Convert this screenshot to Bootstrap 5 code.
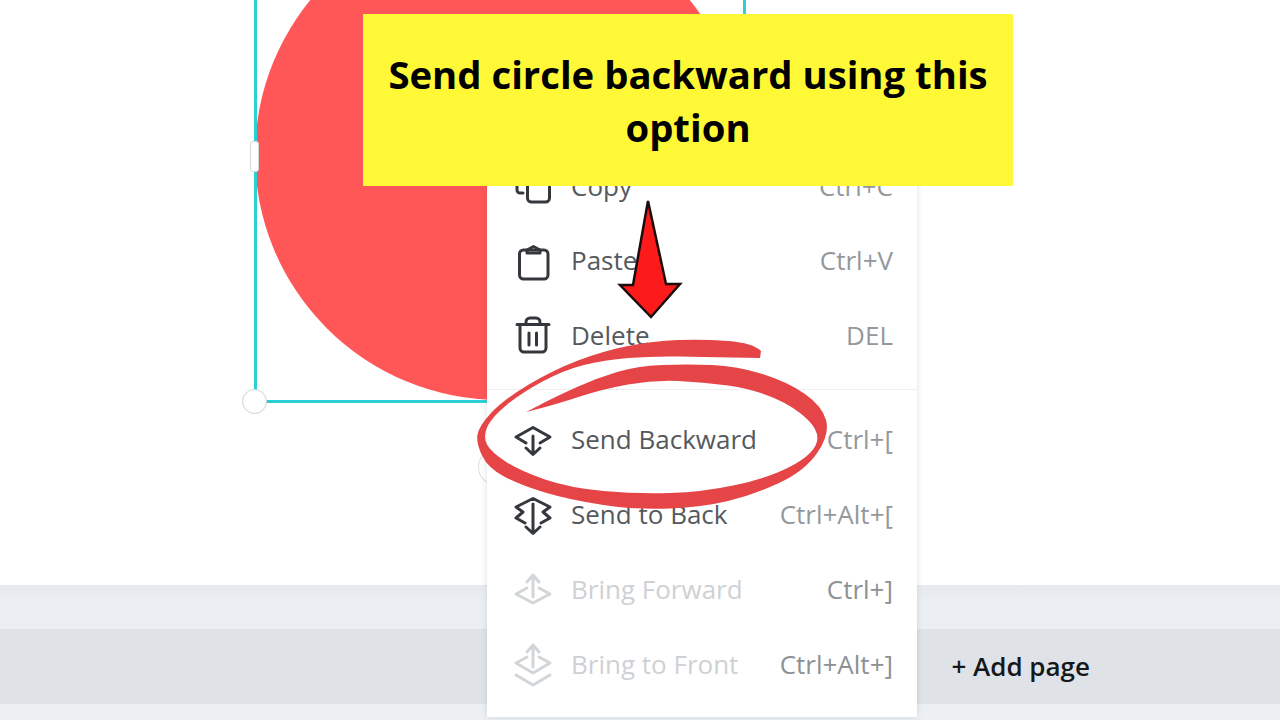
<!DOCTYPE html>
<html lang="en">
<head>
    <meta charset="UTF-8">
    <title>Send circle backward</title>
    <link rel="stylesheet" href="https://cdn.jsdelivr.net/npm/bootstrap@5.3.0/dist/css/bootstrap.min.css">
    <style>
        body { width: 1280px; height: 720px; overflow: hidden; background: #fff; font-family: "Open Sans", "Liberation Sans", sans-serif; }
        .stage { width: 1280px; height: 720px; }
        .work-canvas { height: 585px; background: #fff; }
        .page-gap { height: 44px; background: linear-gradient(#e6eaee, #ebeff3 40%); }
        .page-bar { height: 75px; background: #dfe3e8; padding-right: 190px; }
        .add-page { font-size: 26px; font-weight: 600; color: #15181b; line-height: 1; padding-bottom: 2px; }
        .page-foot { height: 16px; background: #edf0f3; }

        .red-circle { left: 255px; top: -90px; width: 490px; height: 490px; border-radius: 50%; background: #ff5757; }
        .sel-box { left: 254px; top: -20px; width: 492px; height: 423px; border: 3px solid #2bd0d6; }
        .side-grip { left: 250px; top: 141px; width: 9px; height: 31px; background: #fff; border: 1px solid #d5d9dc; border-radius: 3px; }
        .round-grip { left: 242px; top: 389px; width: 25px; height: 25px; background: #fff; border: 1px solid #ccd2d6; border-radius: 50%; }
        .rotate-grip { left: 478px; top: 450px; width: 30px; height: 34px; background: #fff; border: 1px solid #dcdfe2; border-radius: 50%; }

        .ctx-menu { left: 487px; top: 130px; width: 430px; height: 587px; background: #fff; padding: 20px 24px 0 26px; box-shadow: 0 0 6px rgba(60, 70, 80, .16); }
        .ctx-row { height: 75px; font-size: 26px; color: #55595d; }
        .ctx-row.tight { height: 74.5px; }
        .ctx-row span { padding-bottom: 2px; }
        .ctx-row svg { width: 40px; height: 48px; overflow: visible; margin-right: 18px; flex: none; fill: none; stroke: #34383c; stroke-width: 3; stroke-linecap: round; stroke-linejoin: round; }
        .ctx-key { margin-left: auto; color: #94989c; }
        .ctx-row.off { color: #ced1d4; }
        .ctx-row.off svg { stroke: #d2d6d9; }
        .ctx-row.off .ctx-key { color: #8d9195; }
        .ctx-line { height: 1px; background: #eceef0; margin: 15px -24px 13px -26px; }

        .note-box { left: 363px; top: 14px; width: 650px; height: 172px; background: #fff836; color: #000; font-size: 38.3px; font-weight: 700; line-height: 53px; padding: 34px 20px 0; }
        .overlay-art { left: 0; top: 0; width: 1280px; height: 720px; pointer-events: none; }
    </style>
</head>
<body>
<div class="stage position-relative overflow-hidden d-flex flex-column">
    <div class="work-canvas position-relative flex-shrink-0">
        <div class="red-circle position-absolute"></div>
        <div class="sel-box position-absolute"></div>
        <div class="side-grip position-absolute"></div>
        <div class="round-grip position-absolute"></div>
        <div class="rotate-grip position-absolute"></div>
    </div>
    <div class="page-gap flex-shrink-0"></div>
    <div class="page-bar d-flex justify-content-end align-items-center flex-shrink-0">
        <span class="add-page">+ Add page</span>
    </div>
    <div class="page-foot flex-grow-1"></div>

    <!-- context menu -->
    <div class="ctx-menu position-absolute">
        <div class="ctx-row tight d-flex align-items-center">
            <svg viewBox="0 0 40 48"><rect x="14.5" y="8" width="22" height="31" rx="4"/><path d="M10 30H7a3 3 0 0 1-3-3V8"/></svg>
            <span>Copy</span><span class="ctx-key">Ctrl+C</span>
        </div>
        <div class="ctx-row tight d-flex align-items-center">
            <svg viewBox="0 0 40 48"><rect x="6.5" y="12" width="28.5" height="29" rx="4"/><path d="M14 12L20.5 8.5L27 12V15H14Z"/></svg>
            <span>Paste</span><span class="ctx-key">Ctrl+V</span>
        </div>
        <div class="ctx-row tight d-flex align-items-center">
            <svg viewBox="0 0 40 48"><path d="M4 12.5H36M7 13V36a4 4 0 0 0 4 4H29a4 4 0 0 0 4-4V13M13 12V10a4 4 0 0 1 4-4h6a4 4 0 0 1 4 4V12M16 21V33M23.500 21V33"/></svg>
            <span>Delete</span><span class="ctx-key">DEL</span>
        </div>
        <div class="ctx-line"></div>
        <div class="ctx-row d-flex align-items-center">
            <svg viewBox="0 0 40 48"><path d="M13 27L3 21L20 11.500L37 21L27 27M20 20V38M13 32L20 38.500L27 32"/></svg>
            <span>Send Backward</span><span class="ctx-key">Ctrl+[</span>
        </div>
        <div class="ctx-row d-flex align-items-center">
            <svg viewBox="0 0 40 48"><path d="M10 21L3 16L20 7.500L37 16L30 21L37 27L28 32M10 21L3 27L12 32M20 13V42M13 36L20 42.500L27 36"/></svg>
            <span>Send to Back</span><span class="ctx-key">Ctrl+Alt+[</span>
        </div>
        <div class="ctx-row off d-flex align-items-center">
            <svg viewBox="0 0 40 48"><path d="M14 22L3 28L20 37L37 28L26 22M20 9V31M14 16L20 9L26 16"/></svg>
            <span>Bring Forward</span><span class="ctx-key">Ctrl+]</span>
        </div>
        <div class="ctx-row off d-flex align-items-center">
            <svg viewBox="0 0 40 48"><path d="M14 16L3 22L20 32L37 22L26 16M20 4V26M14 11L20 4L26 11M3 34L20 44L37 34"/></svg>
            <span>Bring to Front</span><span class="ctx-key">Ctrl+Alt+]</span>
        </div>
    </div>

    <!-- annotation on top of the screenshot -->
    <div class="note-box position-absolute text-center">Send circle backward using this option</div>
    <svg class="overlay-art position-absolute" viewBox="0 0 1280 720">
        <path id="scribble" fill="#e64547"/>
        <path d="M648 201L666 284H680L651 317L620 285H633Z" fill="#fc1a1a" stroke="#1c0c0c" stroke-width="2.5" stroke-linejoin="miter"/>
    </svg>
</div>
<script src="https://cdn.jsdelivr.net/npm/bootstrap@5.3.0/dist/js/bootstrap.bundle.min.js"></script>
<script>
    // outline of the hand drawn ring, smoothed through the midpoints
    const ring = [[761,351],[753,343],[703,339],[653,341],[603,351],[553,370],[503,400],[479,426],[476,443],[488,468],[520,485],[570,500],[637,510],[703,507],[753,495],[805,471],[830,434],[822,406],[788,382],[737,366],[687,364],[637,366],[597,378],[557,396],[526,412],[526,412],[557,404],[603,389],[653,380],[703,382],[753,389],[795,407],[821,433],[811,456],[768,478],[703,492],[637,494],[570,488],[520,471],[491,452],[483,437],[491,418],[521,393],[564,370],[604,360],[653,356],[703,357],[760,358]];
    let d = `M${ring[0]}`;
    for (let i = 1; i < ring.length - 1; i++) {
        const mx = (ring[i][0] + ring[i + 1][0]) / 2;
        const my = (ring[i][1] + ring[i + 1][1]) / 2;
        d += `Q${ring[i]} ${mx},${my}`;
    }
    d += `L${ring[ring.length - 1]}Z`;
    document.getElementById('scribble').setAttribute('d', d);
</script>
</body>
</html>
